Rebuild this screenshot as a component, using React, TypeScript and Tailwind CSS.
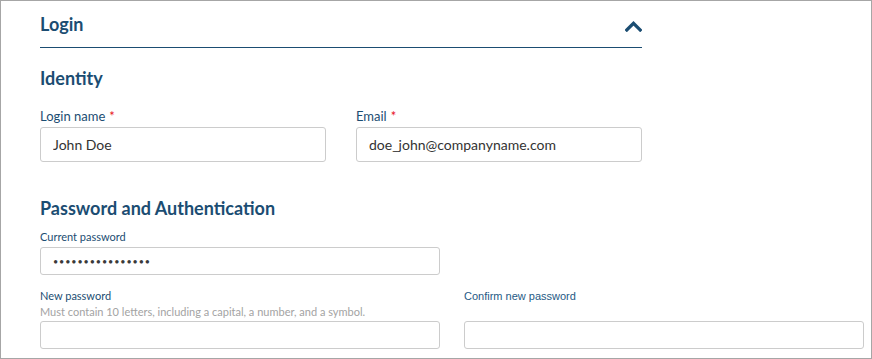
import { useState } from "react"

const blue = "text-[#1b4d72]"

function Label({ text, required }: { text: string; required?: boolean }) {
  return (
    <div className={`text-[13px] leading-[16px] ${blue}`}>
      {text}
      {required && <span className="ml-[4px] text-[#e8111b]">*</span>}
    </div>
  )
}

function SmallLabel({ text, arial }: { text: string; arial?: boolean }) {
  return (
    <div
      className={`text-[11px] leading-[14px] ${blue} ${
        arial ? "font-['Liberation_Sans',Arial,sans-serif] text-[#1f5a85]" : ""
      }`}
    >
      {text}
    </div>
  )
}

function ChevronUp() {
  return (
    <svg width="17" height="11" viewBox="0 0 17 11" className="mt-[8px] text-[#1b4d72]">
      <polyline
        points="1.8,9 8.5,2.3 15.2,9"
        fill="none"
        stroke="currentColor"
        strokeWidth="3.2"
        strokeLinecap="square"
      />
    </svg>
  )
}

export default function App() {
  const [login, setLogin] = useState("John Doe")
  const [email, setEmail] = useState("doe_john@companyname.com")
  const [current, setCurrent] = useState("abcdefghijklmnop")

  const bigInput =
    "h-[35px] w-full rounded-[3px] border border-[#cccccc] bg-white px-[12px] text-[14px] text-[#333333] outline-none"
  const smallInput =
    "h-[28px] w-full rounded-[3px] border border-[#cccccc] bg-white px-[12px] text-[14px] text-[#333333] outline-none"
  const dotInput =
    "h-[28px] w-full rounded-[3px] border border-[#cccccc] bg-white pl-[12px] pr-[12px] text-[9px] tracking-[0.9px] text-[#3a3a3a] outline-none"

  return (
    <div className="h-[359px] w-[872px] overflow-hidden border border-[#a6a6a6] bg-white pl-[39px] font-['Lato','Open_Sans',sans-serif]">
      {/* section header */}
      <div className="flex w-[602px] items-start justify-between border-b border-[#1b4d72] pt-[12px] pb-[12px]">
        <h2 className={`text-[18px] font-bold leading-[22px] ${blue}`}>Login</h2>
        <ChevronUp />
      </div>

      <h3 className={`mt-[19px] text-[18px] font-bold leading-[22px] ${blue}`}>Identity</h3>

      <div className="mt-[19px] flex w-[602px] gap-[30px]">
        <div className="flex-1">
          <Label text="Login name" required />
          <input className={`mt-[3px] ${bigInput}`} value={login} onChange={(e) => setLogin(e.target.value)} />
        </div>
        <div className="flex-1">
          <Label text="Email" required />
          <input className={`mt-[3px] ${bigInput}`} value={email} onChange={(e) => setEmail(e.target.value)} />
        </div>
      </div>

      <h3 className={`mt-[35px] text-[18px] font-bold leading-[22px] ${blue}`}>Password and Authentication</h3>

      <div className="mt-[11px] w-[400px]">
        <SmallLabel text="Current password" />
        <input
          type="password"
          className={`mt-[3px] ${dotInput}`}
          value={current}
          onChange={(e) => setCurrent(e.target.value)}
        />
      </div>

      <div className="mt-[14px] flex w-[824px] gap-[24px]">
        <div className="flex-1">
          <SmallLabel text="New password" />
          <div className="mt-[2px] text-[11px] leading-[14px] text-[#a3a3a3]">
            Must contain 10 letters, including a capital, a number, and a symbol.
          </div>
          <input type="password" className={`mt-[2px] ${smallInput}`} />
        </div>
        <div className="flex-1">
          <SmallLabel text="Confirm new password" arial />
          <div className="mt-[2px] h-[14px]" />
          <input type="password" className={`mt-[2px] ${smallInput}`} />
        </div>
      </div>
    </div>
  )
}
